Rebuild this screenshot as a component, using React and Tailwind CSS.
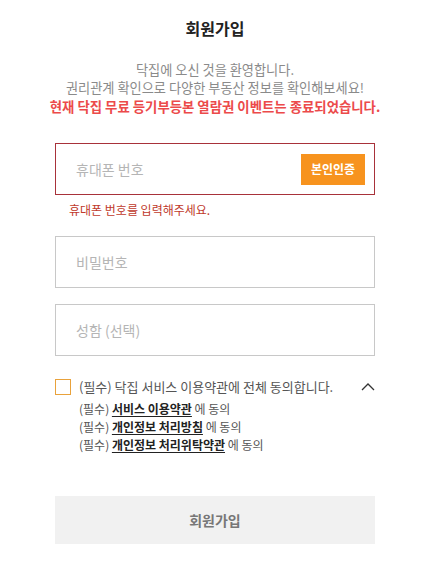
const font = { fontFamily: '"Noto Sans CJK KR", "Noto Sans", sans-serif' }

function Field({ placeholder, error, children }) {
  return (
    <div className={`flex h-[52px] items-center border bg-white pl-[20px] pr-[9px] ${error ? 'border-[#a8323a]' : 'border-[#c8c8c8]'}`}>
      <span className="flex-1 text-[14px] text-[#b5b5b5]">{placeholder}</span>
      {children}
    </div>
  )
}

function Term({ label }) {
  return (
    <div className="text-[12px] leading-[18px] text-[#555]">
      (필수) <span className="font-bold text-[#222] underline underline-offset-2">{label}</span> 에 동의
    </div>
  )
}

export default function App() {
  return (
    <div className="min-h-[570px] bg-white" style={font}>
      <div className="mx-auto w-[320px] pt-[17px]">
        <h1 className="text-center text-[16px] font-bold leading-[22px] text-[#222]">회원가입</h1>

        <div className="-mx-[40px] mt-[22px] text-center text-[13.2px] leading-[18px] text-[#8a8a8a]">
          <p>닥집에 오신 것을 환영합니다.</p>
          <p>권리관계 확인으로 다양한 부동산 정보를 확인해보세요!</p>
          <p className="text-[13.4px] font-bold text-[#ec4a4a]">현재 닥집 무료 등기부등본 열람권 이벤트는 종료되었습니다.</p>
        </div>

        <div className="mt-[28px]">
          <Field placeholder="휴대폰 번호" error>
            <button className="h-[31px] w-[64px] bg-[#f7931e] text-[12px] font-bold text-white">본인인증</button>
          </Field>
          <p className="mt-[6px] pl-[14px] text-[12px] leading-[18px] text-[#c0392b]">휴대폰 번호를 입력해주세요.</p>
        </div>

        <div className="mt-[17px] flex flex-col gap-[16px]">
          <Field placeholder="비밀번호" />
          <Field placeholder="성함 (선택)" />
        </div>

        <div className="mt-[22px] flex items-start gap-[8px]">
          <span className="mt-[1px] h-[16px] w-[16px] shrink-0 border border-[#e9a23b]" />
          <div className="flex-1">
            <div className="flex items-center justify-between text-[13px] leading-[18px] text-[#555]">
              <span>(필수) 닥집 서비스 이용약관에 전체 동의합니다.</span>
              <svg width="14" height="10" viewBox="0 0 14 10">
                <polyline points="1,8 7,2 13,8" fill="none" stroke="#333" strokeWidth="1.3" />
              </svg>
            </div>
            <div className="mt-[4px]">
              <Term label="서비스 이용약관" />
              <Term label="개인정보 처리방침" />
              <Term label="개인정보 처리위탁약관" />
            </div>
          </div>
        </div>

        <button className="mt-[42px] h-[48px] w-full bg-[#f1f1f1] text-[14px] font-bold text-[#777]">회원가입</button>
      </div>
    </div>
  )
}
